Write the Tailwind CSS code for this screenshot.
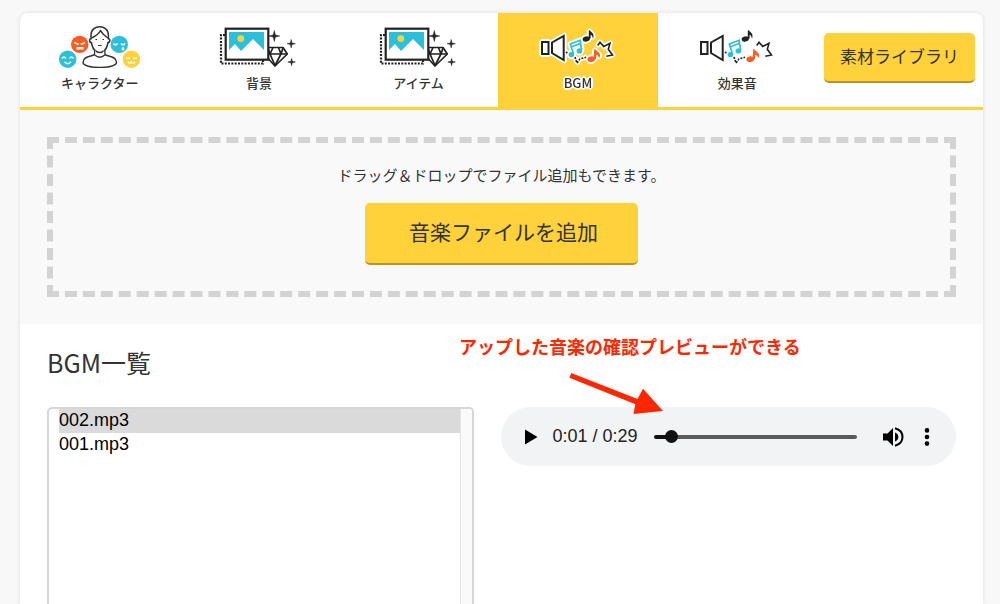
<!DOCTYPE html>
<html lang="ja">
<head>
    <meta charset="UTF-8">
    <meta name="viewport" content="width=device-width, initial-scale=1.0">
    <title>BGM一覧</title>
    <script src="https://cdn.jsdelivr.net/npm/@tailwindcss/browser@4"></script>
</head>
<body class="h-screen overflow-hidden bg-[#f8f8f8] pt-[13px] pr-[17px] pl-5 font-['Noto_Sans_CJK_JP',sans-serif] text-[#333]">
    <!-- アイコン定義 -->
    <svg class="hidden" aria-hidden="true">
        <symbol id="icon-picture" viewBox="0 0 84 44">
            <path d="M8 11H4V39.5H46V36" fill="none" stroke="#222" stroke-width="2.2" stroke-dasharray="2 1.3"/>
            <g fill="none" stroke="#222" stroke-width="1.7" stroke-linejoin="round">
                <path d="M51 23.5H66L70.3 30L58 42L47 30Z" fill="#fff"/>
                <path d="M47 30H70M53 30L58 41.5L64 30L61.5 23.5M53 30L56 23.5M53 30L51 24M64 30L66 24"/>
            </g>
            <rect x="8.7" y="4.7" width="42.6" height="31" fill="#fff" stroke="#222" stroke-width="2.2"/>
            <path d="M12 8H47V26L36 15L24 27L18 20L12 26Z" fill="#2bc0d9"/>
            <circle cx="23.8" cy="14.6" r="3.4" fill="#ffd13b"/>
            <path d="M57.3 6.5L58.4 10.9L62.8 12L58.4 13.1L57.3 17.5L56.2 13.1L51.8 12L56.2 10.9ZM74.2 15.5L75 18.9L78.4 19.7L75 20.5L74.2 23.9L73.4 20.5L70 19.7L73.4 18.9ZM74.6 34.2L75.3 37.3L78.4 38L75.3 38.7L74.6 41.8L73.9 38.7L70.8 38L73.9 37.3Z" fill="#222" stroke="#222" stroke-width=".5"/>
        </symbol>
        <symbol id="icon-sound" viewBox="0 0 84 44">
            <g fill="#fff" stroke="#222" stroke-width="2">
                <rect x="6" y="18" width="6.5" height="12"/>
                <path d="M16 18.5L27.7 12V36L16 29Z"/>
            </g>
            <circle cx="30.7" cy="28.4" r="1" fill="#222"/>
            <g fill="#2bc0d9" stroke="#2bc0d9" stroke-width="1.2">
                <ellipse cx="35.4" cy="30.6" rx="2.2" ry="2"/>
                <ellipse cx="43.4" cy="26.9" rx="2.2" ry="2"/>
                <path d="M37.5 30L34.3 20L44 16.3L45.7 26M35.2 23L44.6 19.3" fill="none" stroke-width="1.7"/>
            </g>
            <g fill="#222" stroke="#222" stroke-width="1.2">
                <ellipse cx="50.2" cy="15" rx="3" ry="2" transform="rotate(-12 50.2 15)"/>
                <path d="M53.4 14.5L53.4 6.5C54.4 9 58 9 57 12.5C56.5 10.8 55 10.3 54 10V14Z"/>
            </g>
            <g fill="#ff5a1f" stroke="#ff5a1f" stroke-width="1.2">
                <ellipse cx="55.2" cy="35.2" rx="3.2" ry="2.2" transform="rotate(-12 55.2 35.2)"/>
                <path d="M58.3 35L58.8 25.5C59.6 28 65 29 63.3 32.6C62.5 30.5 61 30 59.8 29.8L59.4 34.5Z"/>
            </g>
            <g fill="none" stroke="#222" stroke-width="1.6">
                <path d="M61.7 21.5L64 18.3L67.7 22.4L74 19.2L72.3 25.3L76.5 31L70.3 32.2"/>
                <path d="M39 33L41 39L44 35L50 33.3" stroke-dasharray="2 1.2"/>
            </g>
        </symbol>
    </svg>

    <main class="flex h-full flex-col rounded-t-lg bg-white shadow-[0_0_4px_rgba(0,0,0,0.12)]">
        <!-- タブ -->
        <header class="flex items-stretch border-b-[3px] border-[#ffd13b]">
            <nav class="flex flex-1 text-[13px] leading-5 font-medium">
                <button type="button" class="flex h-[94px] flex-1 flex-col items-center pt-[11px]">
                    <svg class="h-[44px] w-[84px]" viewBox="0 0 84 44" aria-hidden="true">
                        <circle cx="21.7" cy="20.4" r="8.7" fill="#ff5a1f"/>
                        <circle cx="9.7" cy="35.2" r="8.7" fill="#2bc0d9"/>
                        <circle cx="61.3" cy="20.4" r="8.7" fill="#2bc0d9"/>
                        <circle cx="73.4" cy="35.2" r="8.7" fill="#ffd13b"/>
                        <g fill="none" stroke="#fff" stroke-width="1.4">
                            <path d="M16.3 18.5L20.6 20.5M27 18.5L22.8 20.5"/>
                            <path d="M4 34.5Q6 31.5 8 34.5M11.5 34.5Q13.5 31.5 15.5 34.5M6.5 37.8Q9.8 41.6 13 37.8"/>
                            <path d="M55.5 19.5Q57.5 22 59.5 19.5M63 19.5Q65 22 67 19.5"/>
                            <path d="M68 34.2H72M75 34.2H79M70 37.8Q71.7 40.4 73.4 38Q75.2 40.4 77 37.8"/>
                        </g>
                        <path d="M18.5 23H25.5V25.4H18.5ZM65 22.5C67.5 25 66.5 26.5 65 26.5C63.5 26.5 63 25 65 22.5Z" fill="#fff"/>
                        <g fill="#fff" stroke="#333" stroke-width="1.5" stroke-linejoin="round">
                            <path d="M36.7 26V30C36 33 25 31 25 38.5C25 45 58.5 45 58.5 38.5C58.5 31 47.4 33 46.8 30V26"/>
                            <path d="M33 15C31 14 31 18.5 33.4 18.5C34 22 36 26 38 27.2Q41.8 30 45.4 27.2C47.5 26 49.4 22 50 18.5C52.4 18.5 52.4 14 50.4 15V11C50.4 0 33 0 33 11Z"/>
                            <path d="M37.4 26.6V31Q41.8 35 46.2 31V26.6" stroke="none"/>
                            <path d="M36.7 31Q41.8 35.5 46.8 31M38 27.2Q41.8 30 45.4 27.2M33.5 14C38 12 41 9.5 42.5 6.5C44 9.5 47 12 50 14" fill="none"/>
                        </g>
                        <path d="M37.5 15.5H39M44.5 15.5H46M40 21.5H43.5" fill="none" stroke="#333" stroke-width="1.2"/>
                    </svg>
                    <span class="mt-[5px]">キャラクター</span>
                </button>
                <button type="button" class="flex h-[94px] flex-1 flex-col items-center pt-[11px]">
                    <svg class="h-[44px] w-[84px]" aria-hidden="true"><use href="#icon-picture"/></svg>
                    <span class="mt-[5px]">背景</span>
                </button>
                <button type="button" class="flex h-[94px] flex-1 flex-col items-center pt-[11px]">
                    <svg class="h-[44px] w-[84px]" aria-hidden="true"><use href="#icon-picture"/></svg>
                    <span class="mt-[5px]">アイテム</span>
                </button>
                <button type="button" aria-current="page" class="flex h-[94px] flex-1 flex-col items-center bg-[#ffd13b] pt-[11px]">
                    <svg class="h-[44px] w-[84px] [filter:drop-shadow(1px_1px_0_#fff)_drop-shadow(-1px_-1px_0_#fff)_drop-shadow(1px_-1px_0_#fff)_drop-shadow(-1px_1px_0_#fff)]" aria-hidden="true"><use href="#icon-sound"/></svg>
                    <span class="mt-[5px] [filter:drop-shadow(1px_1px_0_#fff)_drop-shadow(-1px_-1px_0_#fff)_drop-shadow(1px_-1px_0_#fff)_drop-shadow(-1px_1px_0_#fff)]">BGM</span>
                </button>
                <button type="button" class="flex h-[94px] flex-1 flex-col items-center pt-[11px]">
                    <svg class="h-[44px] w-[84px]" aria-hidden="true"><use href="#icon-sound"/></svg>
                    <span class="mt-[5px]">効果音</span>
                </button>
            </nav>
            <button type="button" class="mt-5 mr-2 ml-[7px] h-[50px] w-[151px] rounded-[5px] border-b-2 border-[#bd921d] bg-[#ffd13b] pb-[2px] text-[17px] leading-6">素材ライブラリ</button>
        </header>

        <!-- ファイル追加 -->
        <section class="bg-[#f9f9f9] p-[27px]">
            <div class="flex flex-col items-center border-[6px] border-dashed border-[#d3d3d3] pt-5 pb-[26px]">
                <p class="text-[15px] leading-6">ドラッグ＆ドロップでファイル追加もできます。</p>
                <button type="button" class="mt-4 h-[62px] w-[273px] rounded-[5px] border-b-2 border-[#bd921d] bg-[#ffd13b] pb-1 pl-1 text-[21px] leading-8">音楽ファイルを追加</button>
            </div>
        </section>

        <!-- BGM一覧 -->
        <section class="relative flex min-h-0 flex-1 flex-col px-[27px] pt-5">
            <h2 id="bgm-title" class="text-[25px] leading-9">BGM一覧</h2>
            <div class="mt-[27px] grid min-h-0 flex-1 grid-cols-[427fr_454fr] gap-[27px] font-['Liberation_Sans','Noto_Sans_CJK_JP',sans-serif] text-[18px]">
                <div class="flex overflow-hidden rounded-t-[5px] border-2 border-b-0 border-[#d6d6d6]">
                    <select size="12" aria-labelledby="bgm-title" class="ml-[10px] h-full flex-1 overflow-hidden bg-white text-black outline-none">
                        <option selected class="h-6 p-0 pt-px leading-6 text-black checked:bg-[#dadada] checked:text-black">002.mp3</option>
                        <option class="h-6 p-0 pt-px leading-6 text-black">001.mp3</option>
                    </select>
                    <div class="w-3 border-l border-[#e4e4e4] bg-[#fafafa]"></div>
                </div>
                <div class="flex h-[59px] items-center self-start rounded-full bg-[#f1f3f4] pr-[23px] pl-[23px] text-[#222]">
                    <button type="button" aria-label="再生">
                        <svg class="size-4" viewBox="0 0 16 16" aria-hidden="true"><path d="M1 0.5L13.5 8L1 15.5Z" fill="#000"/></svg>
                    </button>
                    <span class="ml-3 w-[86px] whitespace-nowrap">0:01 / 0:29</span>
                    <input type="range" min="0" max="29" step="0.1" value="1.6" aria-label="再生位置" class="ml-4 h-1 min-w-0 flex-1 appearance-none rounded-full bg-[linear-gradient(90deg,#111_8%,#5a5a5a_8%)] [&::-webkit-slider-thumb]:size-[13px] [&::-webkit-slider-thumb]:appearance-none [&::-webkit-slider-thumb]:rounded-full [&::-webkit-slider-thumb]:bg-[#111]">
                    <button type="button" aria-label="音量" class="ml-[25px]">
                        <svg class="size-[22px]" viewBox="0 0 22 22" aria-hidden="true">
                            <path d="M1 7.5H5.5L11 2V20L5.5 14.5H1ZM13 6.5C17.5 8 17.5 14 13 15.5Z" fill="#000"/>
                            <path d="M13 2.3C23 5 23 17 13 19.7" fill="none" stroke="#000" stroke-width="2"/>
                        </svg>
                    </button>
                    <button type="button" aria-label="その他" class="ml-[17px]">
                        <svg class="h-[18px] w-3" viewBox="0 0 12 18" aria-hidden="true"><circle cx="6" cy="2.4" r="2.3"/><circle cx="6" cy="9" r="2.3"/><circle cx="6" cy="15.6" r="2.3"/></svg>
                    </button>
                </div>
            </div>

            <!-- 注釈 -->
            <div class="absolute top-2 left-[439px] text-[#ff2600]">
                <p class="text-[18px] leading-7 font-bold whitespace-nowrap">アップした音楽の確認プレビューができる</p>
                <svg class="mt-[13px] ml-[108px] h-[42px] w-[100px]" viewBox="0 0 100 42" aria-hidden="true"><path d="M4.2 0L2.4 4.8L68.3 31.2L66.5 41L96 38L76 15.7L70.5 26Z" fill="currentColor"/></svg>
            </div>
        </section>
    </main>
</body>
</html>
